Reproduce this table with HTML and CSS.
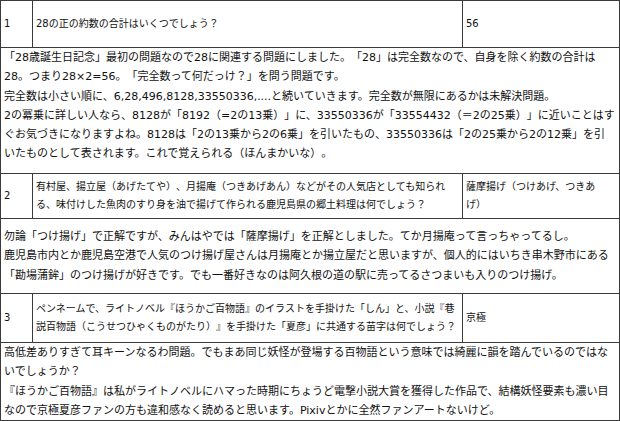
FILE: index.html
```html
<!DOCTYPE html>
<html lang="ja">
<head>
<meta charset="utf-8">
<title>クイズ</title>
<link rel="stylesheet" href="styles.css">
</head>
<body>
<table class="quiz">
  <colgroup>
    <col class="c-no">
    <col class="c-q">
    <col class="c-a">
  </colgroup>
  <tbody>
    <tr class="q-row q-first">
      <td class="no">1</td>
      <td class="q">28の正の約数の合計はいくつでしょう？</td>
      <td class="a">56</td>
    </tr>
    <tr class="c-row c-long">
      <td class="note" colspan="3">「28歳誕生日記念」最初の問題なので28に関連する問題にしました。「28」は完全数なので、自身を除く約数の合計は28。つまり28×2=56。「完全数って何だっけ？」を問う問題です。<br>完全数は小さい順に、6,28,496,8128,33550336,....と続いていきます。完全数が無限にあるかは未解決問題。<br>2の冪乗に詳しい人なら、8128が「8192（=2の13乗）」に、33550336が「33554432（＝2の25乗）」に近いことはすぐお気づきになりますよね。8128は「2の13乗から2の6乗」を引いたもの、33550336は「2の25乗から2の12乗」を引いたものとして表されます。これで覚えられる（ほんまかいな）。</td>
    </tr>
    <tr class="q-row q-short">
      <td class="no">2</td>
      <td class="q">有村屋、揚立屋（あげたてや）、月揚庵（つきあげあん）などがその人気店としても知られる、味付けした魚肉のすり身を油で揚げて作られる鹿児島県の郷土料理は何でしょう？</td>
      <td class="a">薩摩揚げ（つけあげ、つきあげ）</td>
    </tr>
    <tr class="c-row c-mid">
      <td class="note" colspan="3">勿論「つけ揚げ」で正解ですが、みんはやでは「薩摩揚げ」を正解としました。てか月揚庵って言っちゃってるし。<br>鹿児島市内とか鹿児島空港で人気のつけ揚げ屋さんは月揚庵とか揚立屋だと思いますが、個人的にはいちき串木野市にある「勘場蒲鉾」のつけ揚げが好きです。でも一番好きなのは阿久根の道の駅に売ってるさつまいも入りのつけ揚げ。</td>
    </tr>
    <tr class="q-row q-tall">
      <td class="no">3</td>
      <td class="q">ペンネームで、ライトノベル『ほうかご百物語』のイラストを手掛けた「しん」と、小説『巷説百物語（こうせつひゃくものがたり）』を手掛けた「夏彦」に共通する苗字は何でしょう？</td>
      <td class="a">京極</td>
    </tr>
    <tr class="c-row">
      <td class="note" colspan="3">高低差ありすぎて耳キーンなるわ問題。でもまあ同じ妖怪が登場する百物語という意味では綺麗に韻を踏んでいるのではないでしょうか？<br>『ほうかご百物語』は私がライトノベルにハマった時期にちょうど電撃小説大賞を獲得した作品で、結構妖怪要素も濃い目なので京極夏彦ファンの方も違和感なく読めると思います。Pixivとかに全然ファンアートないけど。</td>
    </tr>
    <tr class="q-row">
      <td class="no"></td>
      <td class="q"></td>
      <td class="a"></td>
    </tr>
  </tbody>
</table>
</body>
</html>
```

FILE: styles.css
```css
html, body {
  margin: 0;
  padding: 0;
  background: #ffffff;
}

body {
  font-family: "DejaVu Sans", "Noto Sans CJK JP", sans-serif;
  color: #111111;
  text-spacing-trim: space-all;
}

.quiz {
  width: 620px;
  border-collapse: collapse;
  table-layout: fixed;
}

.c-no { width: 32px; }
.c-a { width: 157px; }

.quiz td {
  border: 1px solid #3a3a3a;
  vertical-align: middle;
}

.q-row { height: 46px; }
.q-first { height: 47px; }
.q-short { height: 45px; }
.q-tall { height: 49px; }

.c-long { height: 126px; }
.c-long .note { vertical-align: top; }
.c-mid { height: 75px; }

.no, .q, .a {
  font-size: 10px;
  line-height: 18px;
  padding: 2px 3px;
}

.a {
  padding-right: 10px;
}

.note {
  font-size: 11px;
  line-height: 19.3px;
  padding: 0 3.5px 0 3px;
}
```
